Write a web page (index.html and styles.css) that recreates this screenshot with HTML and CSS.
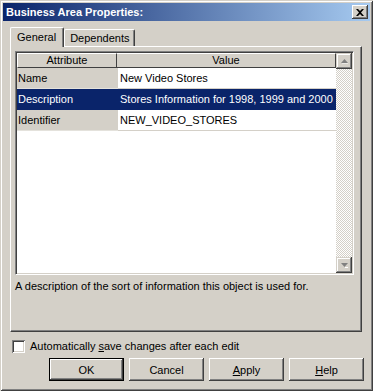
FILE: index.html
```html
<!DOCTYPE html>
<html lang="en">
<head>
    <meta charset="UTF-8">
    <title>Business Area Properties</title>
    <link rel="stylesheet" href="styles.css">
</head>
<body>
    <div class="window">
        <div class="titlebar">
            <span class="title">Business Area Properties:</span>
            <span class="close-btn">
                <svg width="8" height="7" viewBox="0 0 8 7"><path d="M0 0h2l2 2 2-2h2L5 3.5 8 7H6L4 5 2 7H0l3-3.5z" fill="#000"/></svg>
            </span>
        </div>

        <div class="content">
            <div class="tabs">
                <div class="tab active">General</div>
                <div class="tab">Dependents</div>
            </div>

            <div class="panel">
                <div class="grid">
                    <div class="grid-main">
                        <div class="grid-row header">
                            <div class="cell attr">Attribute</div>
                            <div class="cell value">Value</div>
                        </div>
                        <div class="grid-row">
                            <div class="cell attr">Name</div>
                            <div class="cell value">New Video Stores</div>
                        </div>
                        <div class="grid-row selected">
                            <div class="cell attr">Description</div>
                            <div class="cell value">Stores Information for 1998, 1999 and 2000</div>
                        </div>
                        <div class="grid-row">
                            <div class="cell attr">Identifier</div>
                            <div class="cell value">NEW_VIDEO_STORES</div>
                        </div>
                    </div>
                    <div class="scrollbar">
                        <div class="scroll-btn">
                            <svg width="7" height="5" viewBox="0 0 7 5"><path d="M3.5 0L7 4H0z" fill="#808080"/><path d="M1 5h7" stroke="#fff"/></svg>
                        </div>
                        <div class="scroll-track"></div>
                        <div class="scroll-btn">
                            <svg width="7" height="5" viewBox="0 0 7 5"><path d="M0 0h7L3.5 4z" fill="#808080"/><path d="M4 4.5h4" stroke="#fff"/></svg>
                        </div>
                    </div>
                </div>
                <p class="hint">A description of the sort of information this object is used for.</p>
            </div>

            <label class="autosave">
                <span class="checkbox"></span>
                <span>Automatically <u>s</u>ave changes after each edit</span>
            </label>

            <div class="buttons">
                <button class="default">OK</button>
                <button>Cancel</button>
                <button><u>A</u>pply</button>
                <button><u>H</u>elp</button>
            </div>
        </div>
    </div>
</body>
</html>
```

FILE: styles.css
```css
body {
    margin: 0;
    background-color: #d4d0c8;
    font-family: "Liberation Sans", Arial, sans-serif;
    font-size: 11px;
    color: #000;
}

.window {
    width: 373px;
    height: 391px;
    box-sizing: border-box;
    padding: 3px;
    background-color: #d4d0c8;
    box-shadow: inset 1px 1px #d4d0c8, inset -1px -1px #404040,
                inset 2px 2px #fff, inset -2px -2px #808080;
}

.titlebar {
    height: 18px;
    display: flex;
    align-items: center;
    justify-content: space-between;
    padding: 0 2px 0 3px;
    background: linear-gradient(to right, #0a246a, #a6caf0);
}

.title {
    color: #fff;
    font-weight: bold;
    font-size: 11px;
}

.close-btn {
    width: 16px;
    height: 14px;
    box-sizing: border-box;
    display: flex;
    align-items: center;
    justify-content: center;
    background-color: #d4d0c8;
    box-shadow: inset -1px -1px #404040, inset 1px 1px #fff, inset -2px -2px #808080;
}

.content {
    padding: 6px 8px 0 7px;
}

.tabs {
    display: flex;
    align-items: flex-end;
    height: 20px;
    margin-bottom: -1px;
    position: relative;
    z-index: 1;
}

.tab {
    height: 16px;
    line-height: 16px;
    padding: 0 5px;
    margin-bottom: 1px;
    background-color: #d4d0c8;
    border-top: 1px solid #fff;
    border-left: 1px solid #fff;
    border-right: 1px solid #404040;
    border-radius: 2px 2px 0 0;
    box-shadow: inset -1px 0 #808080;
}

.tab.active {
    height: 19px;
    line-height: 18px;
    margin-bottom: 0;
    padding: 0 7px 0 6px;
}

.panel {
    height: 286px;
    box-sizing: border-box;
    padding: 4px 7px 0 4px;
    border-top: 1px solid #fff;
    border-left: 1px solid #fff;
    border-right: 1px solid #404040;
    border-bottom: 1px solid #404040;
    box-shadow: inset -1px -1px #808080;
}

.grid {
    display: flex;
    height: 224px;
    box-sizing: border-box;
    border-top: 1px solid #808080;
    border-left: 1px solid #808080;
    border-right: 1px solid #fff;
    border-bottom: 1px solid #fff;
    box-shadow: inset 1px 1px #404040, inset -1px -1px #d4d0c8;
    padding: 1px;
}

.grid-main {
    flex: 1;
    background-color: #fff;
}

.grid-row {
    display: flex;
    height: 21px;
}

.cell {
    line-height: 20px;
    border-bottom: 1px solid #d4d0c8;
    white-space: nowrap;
    overflow: hidden;
}

.cell.attr {
    width: 100px;
    padding-left: 1px;
    background-color: #d4d0c8;
    border-bottom-color: #e4e2dc;
}

.cell.value {
    flex: 1;
    padding-left: 2px;
}

.grid-row.header {
    height: 15px;
}

.grid-row.header .cell {
    line-height: 13px;
    text-align: center;
    background-color: #d4d0c8;
    border-top: 1px solid #fff;
    border-bottom: 1px solid #404040;
    border-right: 1px solid #404040;
    padding-left: 0;
}

.grid-row.header .cell.attr {
    border-left: 1px solid #fff;
    width: 98px;
}

.grid-row.selected .cell {
    background-color: #0a246a;
    color: #fff;
    border-bottom-color: #0a246a;
}

.scrollbar {
    width: 16px;
    display: flex;
    flex-direction: column;
}

.scroll-btn {
    height: 16px;
    box-sizing: border-box;
    display: flex;
    align-items: center;
    justify-content: center;
    background-color: #d4d0c8;
    box-shadow: inset -1px -1px #404040, inset 1px 1px #d4d0c8,
                inset -2px -2px #808080, inset 2px 2px #fff;
}

.scroll-track {
    flex: 1;
    background: repeating-conic-gradient(#d4d0c8 0 25%, #fff 0 50%) 0 0 / 2px 2px;
}

.hint {
    margin: 5px 0 0;
    line-height: 13px;
}

.autosave {
    display: flex;
    align-items: center;
    gap: 5px;
    margin: 7px 0 0 2px;
    height: 14px;
}

.checkbox {
    width: 13px;
    height: 13px;
    box-sizing: border-box;
    background-color: #fff;
    box-shadow: inset 1px 1px #808080, inset -1px -1px #fff,
                inset 2px 2px #404040, inset -2px -2px #d4d0c8;
}

.buttons {
    display: flex;
    justify-content: flex-end;
    gap: 5px;
    margin-top: 5px;
    margin-right: -2px;
}

button {
    width: 75px;
    height: 23px;
    padding: 0;
    font-family: inherit;
    font-size: 11px;
    color: #000;
    background-color: #d4d0c8;
    border: none;
    box-shadow: inset -1px -1px #404040, inset 1px 1px #fff,
                inset -2px -2px #808080, inset 2px 2px #d4d0c8;
}

button.default {
    border: 1px solid #000;
}
```
